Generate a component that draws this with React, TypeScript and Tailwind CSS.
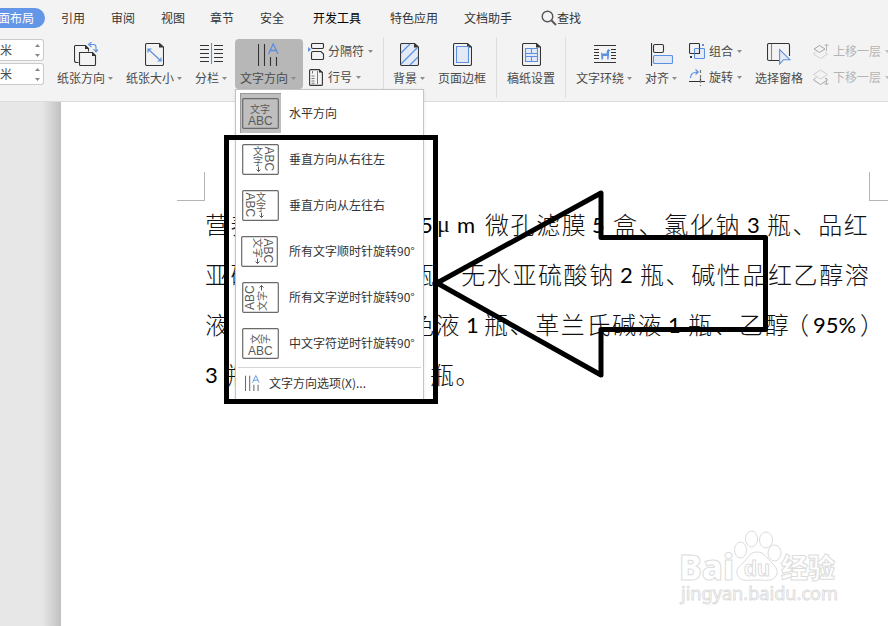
import type { ReactNode } from "react";
import clsx from "clsx";

const DARK = "#333333";
const BLUE = "#5b8fe0";
const PALE = "#e3eaf5";

const tabs = [
  { label: "引用", className: "w-[50px]" },
  { label: "审阅", className: "w-[50px]" },
  { label: "视图", className: "w-[49px]" },
  { label: "章节", className: "w-[50px]" },
  { label: "安全", className: "w-[53px]" },
  { label: "开发工具", className: "w-[77px] text-black" },
  { label: "特色应用", className: "w-[74px]" },
  { label: "文档助手", className: "w-[76px]" },
];

function Caret({ className }: { className?: string }) {
  return (
    <svg width="5" height="3" viewBox="0 0 5 3" className={clsx("shrink-0", className)}>
      <path d="M0 0h5L2.5 3z" fill="#8c8c8c" />
    </svg>
  );
}

function Tool({ icon, label, caret, className }: { icon: ReactNode; label: string; caret?: boolean; className?: string }) {
  return (
    <div className={clsx("flex shrink-0 flex-col items-center pt-1.5", className)}>
      <div className="flex h-6 items-center justify-center">{icon}</div>
      <div className="mt-1 flex h-4 items-center gap-[3px] whitespace-nowrap leading-4">
        <span>{label}</span>
        {caret && <Caret className="mr-px" />}
      </div>
    </div>
  );
}

function SmallTool({ icon, label, disabled }: { icon: ReactNode; label: string; disabled?: boolean }) {
  return (
    <div className={clsx("flex h-4 items-center whitespace-nowrap leading-4", disabled && "text-[#b5b5b5]")}>
      <div className="mr-1 flex w-4 shrink-0 justify-center">{icon}</div>
      <span>{label}</span>
      <Caret className={clsx("ml-1", disabled && "opacity-50")} />
    </div>
  );
}

function Separator({ className }: { className?: string }) {
  return <div className={clsx("mt-px h-[61px] w-px shrink-0 bg-[#dedede]", className)} />;
}

function Spinner() {
  return (
    <div className="flex h-[22px] w-11 items-center justify-between rounded-r-[3px] border border-l-0 border-[#cacaca] bg-white pr-[3px]">
      <span>米</span>
      <svg width="5" height="13" viewBox="0 0 5 13">
        <path d="M0 3h5L2.5 0zM0 10h5L2.5 13z" fill="#888" />
      </svg>
    </div>
  );
}

function OrientationIcon() {
  return (
    <svg width="24" height="24" viewBox="0 0 24 24" fill="none" stroke={DARK} strokeWidth="1.1">
      <path d="M4.500 20.500h-2a2 2 0 0 1-2-2v-14a1 1 0 0 1 1-1h10l3 3v3" />
      <path d="M5.500 10.500h13l3 3v9a1 1 0 0 1-1 1h-14a1 1 0 0 1-1-1z" fill="#f3f3f3" />
      <path d="M18 10v4h4z M11 3v4h4z" fill={DARK} stroke="none" />
      <path d="M16 2.500h3.500a2.500 2.500 0 0 1 2.500 2.500v4M17.500 0l-3 2.500 3 2.500M19.500 7l2.500 3 2.500-3" stroke={BLUE} />
    </svg>
  );
}

function Sheet({ fill = "none", children }: { fill?: string; children?: ReactNode }) {
  return (
    <svg width="19" height="23" viewBox="0 0 19 23" fill="none">
      <path d="M2 .5h12.500l4 3.500V21a1.500 1.500 0 0 1-1.500 1.500H2A1.500 1.500 0 0 1 .5 21V2A1.500 1.500 0 0 1 2 .5z" fill={fill} stroke={DARK} strokeWidth="1.100" />
      <path d="M14 .5v4h4.500z" fill={DARK} />
      {children}
    </svg>
  );
}

function ColumnsIcon() {
  return (
    <svg width="23" height="22" viewBox="0 0 23 22" fill="none" strokeWidth="1.100">
      <path d="M0 2.500h9M0 6.500h9M0 10.500h9M0 14.500h9M0 18.500h9M14 2.500h9M14 6.500h9M14 10.500h9M14 14.500h9M14 18.500h9" stroke={DARK} />
      <path d="M11.500 0v21" stroke={BLUE} />
    </svg>
  );
}

function TextDirectionIcon({ className }: { className?: string }) {
  return (
    <svg viewBox="0 0 21 23" fill="none" className={className}>
      <path d="M.5 1v22M6.500 1v22M12.500 14v9M18.500 14v9" stroke={DARK} strokeWidth="1.100" />
      <path d="M10.500 11 15.200.8 20 11M12.200 7.500h6" stroke={BLUE} strokeWidth="1.300" />
    </svg>
  );
}

function BreakIcon() {
  return (
    <svg width="17" height="17" viewBox="0 0 17 17" fill="none" stroke={DARK} strokeWidth="1.100" className="shrink-0">
      <path d="M3.500 1.500v2.500A1.500 1.500 0 0 0 5 5.500h9A1.500 1.500 0 0 0 15.500 4V1.500a1 1 0 0 0-1-1h-10a1 1 0 0 0-1 1zM4.500 16.500a1 1 0 0 1-1-1V10A1.500 1.500 0 0 1 5 8.500h8l2.500 2.500v4.500a1 1 0 0 1-1 1z" />
      <path d="M0 4v5l3-2.500z" fill={BLUE} stroke="none" />
    </svg>
  );
}

function LineNumberIcon() {
  return (
    <svg width="14" height="17" viewBox="0 0 14 17" fill="none" stroke={DARK} strokeWidth="1.100">
      <path d="M2 .6h8l3.400 3v11.800a1 1 0 0 1-1 1H1.600a1 1 0 0 1-1-1V1.600a1 1 0 0 1 1-1z" />
      <path d="M8.500 2v13M3.500 2v2.500M2.500 7h3M2.500 9.500h3M2.500 12h3M2.500 14.300h3" stroke="#777" strokeWidth="1" />
      <path d="M10 0v3.500h4z" fill={DARK} stroke="none" />
    </svg>
  );
}

function WrapIcon() {
  return (
    <svg width="22" height="20" viewBox="0 0 22 20" fill="none">
      <path d="M0 1.500h22M0 5.500h5M17 5.500h5M0 8.500h5M17 8.500h5M0 11.500h5M17 11.500h5M0 14.500h5M17 14.500h5M0 18.500h22" stroke={DARK} strokeWidth="1.100" />
      <path d="M7 8.500l1.500 1h4l.5-3 1.500-1.500 2 1.500-1.500 1v3l-.5 5h-1.300v-3.500H9.300L9 15.500H7.500z" fill={BLUE} />
    </svg>
  );
}

function AlignIcon() {
  return (
    <svg width="22" height="23" viewBox="0 0 22 23" fill="none" strokeWidth="1.100">
      <path d="M.5 0v23" stroke={DARK} />
      <rect x="2.500" y="1.500" width="10" height="8" rx="1.500" stroke={DARK} />
      <rect x="2.500" y="12.500" width="19" height="8" rx="1" fill={PALE} stroke={BLUE} />
    </svg>
  );
}

function GroupIcon() {
  return (
    <svg width="16" height="17" viewBox="0 0 16 17" fill="none" strokeWidth="1.100">
      <rect x=".5" y=".5" width="10" height="10" rx="1" stroke={DARK} />
      <rect x="5.500" y="5.500" width="10" height="10" rx="1" fill={PALE} fillOpacity=".7" stroke={BLUE} />
      <path d="M5.500 10.500h5v-5" stroke={DARK} />
      <path d="M13 1h2v2h-2z" fill={BLUE} />
      <path d="M1 13h2v2H1z" fill={DARK} />
    </svg>
  );
}

function RotateIcon() {
  return (
    <svg width="16" height="17" viewBox="0 0 16 17" fill="none" strokeWidth="1.200">
      <path d="M1.500 9C1.500 5 4 3 9 3M6.500.5 9.200 3 6.500 5.500" stroke={BLUE} />
      <path d="M0 12.500h16M11.500 9.500v3" stroke={DARK} />
      <path d="M11.500 1v16" stroke="#777" strokeDasharray="3 2" />
    </svg>
  );
}

function SelectPaneIcon() {
  return (
    <svg width="24" height="22" viewBox="0 0 24 22" fill="none" strokeWidth="1.100">
      <path d="M12 17.500H2A1.500 1.500 0 0 1 .5 16V2A1.500 1.500 0 0 1 2 .5h19A1.500 1.500 0 0 1 22.500 2v11" stroke={DARK} />
      <path d="M4.500 1v16" stroke="#888" />
      <path d="M12.600 6.500v14.500l4-4.300h6.300z" fill={PALE} stroke={BLUE} />
    </svg>
  );
}

function LayerIcon({ down }: { down?: boolean }) {
  return (
    <svg width="16" height="17" viewBox="0 0 16 17" fill="none" stroke="#b5b5b5">
      <path d={down ? "M7.500 1 14.500 5.500 7.500 10 .5 5.500z" : "M6.500 2.500 12 6 6.500 9.500 1 6z"} stroke={down ? "#cfcfcf" : "#a5a5a5"} />
      <path d="M3 8.500.5 11 7.500 15.500 14.500 11l-2.500-2" stroke={down ? "#a5a5a5" : "#cfcfcf"} />
      {down ? <path d="M13.500 9v7M11.500 14l2 2 2-2" /> : <path d="M13.500 8V1M11.500 3l2-2 2 2" />}
    </svg>
  );
}

type Direction = "horizontal" | "rtl" | "ltr" | "cw" | "ccw" | "symbol";

function DirectionIcon({ kind }: { kind: Direction }) {
  return (
    <svg width="37" height="31" viewBox="0 0 37 31" className="font-['Liberation_Sans','Noto_Sans_CJK_SC',sans-serif]" fill="#5a5a5a">
      <rect x=".7" y=".7" width="35.600" height="29.600" rx="1" fill={kind === "horizontal" ? "none" : "white"} stroke="#6a6a6a" strokeWidth="1.200" />
      {kind === "horizontal" && (
        <>
          <text x="8" y="15" fontSize="10">文字</text>
          <text x="6" y="26.500" fontSize="12">ABC</text>
        </>
      )}
      {kind === "rtl" && (
        <>
          <text x="11" y="11" fontSize="10">文</text>
          <text x="11" y="21" fontSize="10">字</text>
          <path d="M16.500 22.500v5M14.500 25.500l2 2 2-2" fill="none" stroke="#5a5a5a" />
          <text transform="translate(23 2.500) rotate(90)" fontSize="12">ABC</text>
        </>
      )}
      {kind === "ltr" && (
        <>
          <text transform="translate(4 2.500) rotate(90)" fontSize="12">ABC</text>
          <text x="14" y="11" fontSize="10">文</text>
          <text x="14" y="21" fontSize="10">字</text>
          <path d="M19.500 22.500v5M17.500 25.500l2 2 2-2" fill="none" stroke="#5a5a5a" />
        </>
      )}
      {kind === "cw" && (
        <>
          <text transform="translate(12.500 2) rotate(90)" fontSize="10">文字</text>
          <path d="M16.500 22.500v5M14.500 25.500l2 2 2-2" fill="none" stroke="#5a5a5a" />
          <text transform="translate(23 2.500) rotate(90)" fontSize="12">ABC</text>
        </>
      )}
      {kind === "ccw" && (
        <>
          <text transform="translate(12 28) rotate(-90)" fontSize="12">ABC</text>
          <text transform="translate(23.500 29) rotate(-90)" fontSize="10">文字</text>
          <path d="M19.500 8.500v-5M17.500 5.500l2-2 2 2" fill="none" stroke="#5a5a5a" />
        </>
      )}
      {kind === "symbol" && (
        <>
          <text transform="translate(17 16) rotate(-90)" fontSize="10">文</text>
          <text transform="translate(27 16) rotate(-90)" fontSize="10">字</text>
          <text x="6" y="26.500" fontSize="12">ABC</text>
        </>
      )}
    </svg>
  );
}

const directions: { kind: Direction; label: string }[] = [
  { kind: "horizontal", label: "水平方向" },
  { kind: "rtl", label: "垂直方向从右往左" },
  { kind: "ltr", label: "垂直方向从左往右" },
  { kind: "cw", label: "所有文字顺时针旋转90°" },
  { kind: "ccw", label: "所有文字逆时针旋转90°" },
  { kind: "symbol", label: "中文字符逆时针旋转90°" },
];

function DirectionMenu() {
  return (
    <div className="absolute left-0 top-[50px] z-20 h-[311px] w-[189px] border border-[#c4c4c4] bg-white text-[#333] shadow-sm">
      {directions.map((d) => (
        <div key={d.kind} className="flex h-[46px] items-center pl-1">
          <div
            className={clsx(
              "flex h-10 w-[41px] items-center",
              d.kind === "horizontal" ? "border-l border-t border-[#999] bg-[#bfbfbf] pl-px" : d.kind === "cw" ? "pl-px" : "pl-0.5",
            )}
          >
            <DirectionIcon kind={d.kind} />
          </div>
          <span className="ml-2 whitespace-nowrap">{d.label}</span>
        </div>
      ))}
      <div className="mx-0.5 mt-px flex h-[31px] items-center border-t border-[#d5d5d5] pl-[7px]">
        <TextDirectionIcon className="h-4 w-[15px]" />
        <span className="ml-[9px] whitespace-nowrap">文字方向选项(X)...</span>
      </div>
    </div>
  );
}

function Ribbon() {
  return (
    <div className="flex h-[65px] text-[#4a4a4a]">
      <div className="flex w-11 shrink-0 flex-col gap-0.5 pt-[3px]">
        <Spinner />
        <Spinner />
      </div>
      <Tool className="ml-[13px] w-[57px]" label="纸张方向" caret icon={<OrientationIcon />} />
      <Tool
        className="ml-3 w-[57px]"
        label="纸张大小"
        caret
        icon={
          <Sheet>
            <path d="M3 6l13 12M3 9.500V6h3.500M16 14.500V18h-3.500" stroke={BLUE} strokeWidth="1.200" />
          </Sheet>
        }
      />
      <Tool className="ml-3 w-[33px]" label="分栏" caret icon={<ColumnsIcon />} />
      <div className="relative ml-[7px] mt-[3px] h-[50px] w-[68px] shrink-0 rounded bg-[#b7b7b7]">
        <Tool className="-mt-[3px] w-[67px]" label="文字方向" caret icon={<TextDirectionIcon className="h-[23px] w-[21px]" />} />
        <DirectionMenu />
      </div>
      <div className="ml-[5px] flex w-[66px] shrink-0 flex-col gap-2.5 pt-[7px]">
        <SmallTool label="分隔符" icon={<BreakIcon />} />
        <SmallTool label="行号" icon={<LineNumberIcon />} />
      </div>
      <Separator className="ml-[9px]" />
      <Tool
        className="ml-[9px] w-[33px]"
        label="背景"
        caret
        icon={
          <Sheet fill={PALE}>
            <path d="M1 10 10 1M1 21 17 5M10 22l8-8" stroke={BLUE} strokeWidth="1.200" />
          </Sheet>
        }
      />
      <Tool
        className="ml-3 w-12"
        label="页面边框"
        icon={
          <Sheet>
            <path d="M3.500 3.500h12v16h-12z" fill={PALE} stroke={BLUE} strokeWidth="1.100" />
          </Sheet>
        }
      />
      <Separator className="ml-2.5" />
      <Tool
        className="ml-2.5 w-12"
        label="稿纸设置"
        icon={
          <Sheet>
            <path d="M3.500 5.500h12v13h-12zM3.500 10.500h12M3.500 13.500h12M9.500 5.500v5M9.500 13.500v5" fill={PALE} stroke={BLUE} strokeWidth="1.100" />
          </Sheet>
        }
      />
      <Separator className="ml-2.5" />
      <Tool className="ml-2.5 w-[57px]" label="文字环绕" caret icon={<WrapIcon />} />
      <Tool className="ml-3 w-[33px]" label="对齐" caret icon={<AlignIcon />} />
      <div className="ml-[11px] flex w-[53px] shrink-0 flex-col gap-2.5 pt-[7px]">
        <SmallTool label="组合" icon={<GroupIcon />} />
        <SmallTool label="旋转" icon={<RotateIcon />} />
      </div>
      <Tool className="ml-[13px] w-12" label="选择窗格" icon={<SelectPaneIcon />} />
      <div className="ml-2.5 flex w-[76px] shrink-0 flex-col gap-2.5 pt-[7px]">
        <SmallTool label="上移一层" disabled icon={<LayerIcon />} />
        <SmallTool label="下移一层" disabled icon={<LayerIcon down />} />
      </div>
    </div>
  );
}

const lines = [
  [
    { text: "营养", className: "w-[215px]" },
    { text: "5", className: "w-[17px] latin" },
    { text: "μ", className: "w-5 font-['Liberation_Serif',serif]" },
    { text: "m", className: "w-7 latin" },
    { text: "微孔滤膜", className: "w-[107px]" },
    { text: "5", className: "w-[21px] latin" },
    { text: "盒、氯化钠", className: "w-[134px]" },
    { text: "3", className: "w-[20px] latin" },
    { text: "瓶、品红", className: "" },
  ],
  [
    { text: "亚硫", className: "w-[205px]" },
    { text: "瓶、无水亚硫酸钠", className: "w-[210px]" },
    { text: "2", className: "w-5 latin" },
    { text: "瓶、碱性品红乙醇溶", className: "" },
  ],
  [
    { text: "液", className: "w-[205px]" },
    { text: "色液", className: "w-[56px]" },
    { text: "1", className: "w-[18px] latin" },
    { text: "瓶、革兰氏碱液", className: "w-[184px]" },
    { text: "1", className: "w-5 latin" },
    { text: "瓶、乙醇", className: "w-[97px]" },
    { text: "（", className: "w-[28px]" },
    { text: "95%", className: "w-[47px] latin" },
    { text: "）", className: "" },
  ],
  [
    { text: "3", className: "w-[22px] latin" },
    { text: "瓶", className: "w-[203px]" },
    { text: "瓶。", className: "" },
  ],
];

function Watermark() {
  return (
    <svg width="170" height="80" viewBox="0 0 170 80" className="absolute left-[676px] top-[527px]" fill="white" stroke="#dcdcdc" strokeWidth="1">
      <g fontWeight="900">
        <text x="3" y="53" fontSize="35" textLength="55" lengthAdjust="spacingAndGlyphs" className="font-['Open_Sans','Liberation_Sans',sans-serif]">Bai</text>
        <text x="105" y="51" fontSize="27" textLength="54" lengthAdjust="spacingAndGlyphs" className="font-['Noto_Sans_CJK_SC',sans-serif]">经验</text>
      </g>
      <ellipse cx="64.500" cy="23" rx="6" ry="8" />
      <ellipse cx="75.500" cy="12" rx="6" ry="8" />
      <ellipse cx="90" cy="13" rx="6.500" ry="8" />
      <ellipse cx="98.500" cy="26" rx="6.500" ry="8" />
      <path d="M81 25c-8 0-9 7-14 11-5 4-8 8-5 13 3 6 10 4 19 4s15 2 19-4c3-5 0-9-4-13-5-4-7-11-15-11z" />
      <text x="68" y="49" fontSize="22" fontWeight="700" textLength="26" lengthAdjust="spacingAndGlyphs" className="font-['Liberation_Sans',sans-serif]">du</text>
      <text x="5" y="73" fontSize="18" strokeWidth=".9" textLength="157" lengthAdjust="spacingAndGlyphs" className="font-['Noto_Sans',sans-serif]">jingyan.baidu.com</text>
    </svg>
  );
}

export default function App() {
  return (
    <div className="relative flex h-[626px] w-[888px] flex-col overflow-hidden bg-white font-['Noto_Sans_CJK_SC',sans-serif] text-xs text-[#333]">
      <header className="relative z-10 h-[102px] shrink-0 border-b border-[#dcdcdc] bg-[#f3f3f3]">
        <div className="flex h-9 items-center">
          <div className="flex h-5 w-[45px] shrink-0 items-center justify-end rounded-r-full bg-[#6496e8] pr-[11px] text-white">
            <span className="whitespace-nowrap">页面布局</span>
          </div>
          <div className="ml-4 flex">
            {tabs.map((tab) => (
              <span key={tab.label} className={clsx("shrink-0 whitespace-nowrap", tab.className)}>
                {tab.label}
              </span>
            ))}
          </div>
          <svg width="16" height="16" viewBox="0 0 16 16" fill="none" stroke="#555" strokeWidth="1.400" className="ml-px">
            <circle cx="6.500" cy="6.500" r="5.300" />
            <path d="M10.500 10.500 15 15" strokeWidth="1.800" />
          </svg>
          <span className="-mt-px">查找</span>
        </div>
        <Ribbon />
      </header>

      <main className="flex flex-1">
        <div className="w-[61px] shrink-0 border-r border-[#c2c2c2] bg-linear-to-r from-[#e7e7e7] from-70% to-[#c3c3c3]" />
        <div className="flex-1 pt-[70px]">
          <div className="flex justify-between">
            <div className="ml-[116px] h-[29px] w-7 border-b border-r border-[#b5b5b5]" />
            <div className="h-[29px] w-[19px] border-b border-l border-[#b5b5b5]" />
          </div>
          <div className="-mt-0.5 ml-36 w-[683px] text-2xl font-light tracking-[1.600px] text-[#111]">
            {lines.map((line, i) => (
              <p key={i} className="flex h-[50px] items-center whitespace-nowrap leading-[50px]">
                {line.map((run, j) => (
                  <span
                    key={j}
                    className={clsx(
                      "shrink-0",
                      run.className,
                      run.className.includes("latin") && "pt-px font-['Lato',sans-serif] text-[22px] font-normal tracking-normal text-black",
                    )}
                  >
                    {run.text}
                  </span>
                ))}
              </p>
            ))}
          </div>
        </div>
      </main>

      <Watermark />

      {/* hand-drawn callout over the menu */}
      <div className="absolute left-[224px] top-[135px] z-30 h-[269px] w-[214px] border-5 border-black" />
      <svg width="340" height="190" viewBox="0 0 340 190" fill="none" stroke="black" strokeWidth="5" className="absolute left-[430px] top-[188px] z-30">
        <path d="M7 95 171 5v44.500h164.500v92H171V187z" strokeLinejoin="round" />
      </svg>
    </div>
  );
}
